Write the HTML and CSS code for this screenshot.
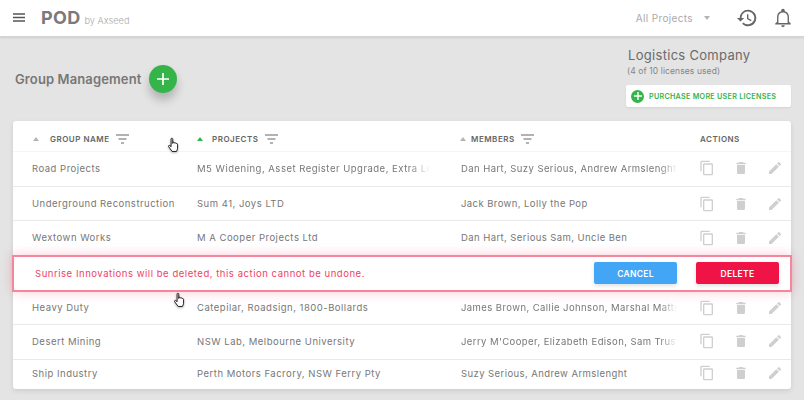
FILE: index.html
```html
<!DOCTYPE html>
<html lang="en">
<head>
<meta charset="utf-8">
<title>POD by Axseed</title>
<link rel="stylesheet" href="styles.css">
</head>
<body>
<svg class="sprites" width="0" height="0">
  <symbol id="filter" viewBox="0 0 13 10"><path d="M0 1h13M2.500 5h8M5 9h3" fill="none" stroke="#666" stroke-width="1.100"/></symbol>
  <symbol id="copy" viewBox="0 0 24 24"><path d="M16 1H4a2 2 0 0 0-2 2v14h2V3h12V1zm3 4H8a2 2 0 0 0-2 2v14a2 2 0 0 0 2 2h11a2 2 0 0 0 2-2V7a2 2 0 0 0-2-2zm0 16H8V7h11v14z" fill="#cfcfcf"/></symbol>
  <symbol id="trash" viewBox="0 0 24 24"><path d="M6 19a2 2 0 0 0 2 2h8a2 2 0 0 0 2-2V7H6v12zM19 4h-3.500l-1-1h-5l-1 1H5v2h14V4z" fill="#cfcfcf"/></symbol>
  <symbol id="pencil" viewBox="0 0 24 24"><path d="M3 17.250V21h3.750L17.810 9.940l-3.750-3.750L3 17.250zM20.710 7.040a1 1 0 0 0 0-1.410l-2.340-2.340a1 1 0 0 0-1.410 0l-1.830 1.830 3.750 3.750 1.830-1.830z" fill="#cfcfcf"/></symbol>
  <symbol id="hand" viewBox="0 0 14 18"><path d="M4.500 1.500c.8-.7 1.700-.2 1.700.7v4.600l.1-1c.8-.6 1.600-.3 1.700.5.800-.5 1.600-.2 1.700.6.800-.3 1.600 0 1.700.9v4.200c0 1.300-.7 2.100-1.200 3.400H5.500L2 10.500c-.8-1-.1-1.900.9-1.500l1.500 1.300V2z" fill="#fff" stroke="#111" stroke-width="1"/></symbol>
</svg>

<header class="topbar">
  <svg class="menu" viewBox="0 0 12 9" width="12" height="9"><path d="M0 1h12M0 4.500h12M0 8h12" stroke="#555" stroke-width="1.400"/></svg>
  <div class="brand"><span class="brand-name">POD</span><span class="brand-by">by Axseed</span></div>
  <div class="top-right">
    <span class="project-select">All Projects</span>
    <span class="select-caret"></span>
    <svg class="history" viewBox="0 0 24 24" width="22" height="22"><path d="M13 3a9 9 0 0 0-9 9H1l3.900 3.900L9 12H6a7 7 0 1 1 2.100 4.900l-1.400 1.400A9 9 0 1 0 13 3zm-1 5v5l4.300 2.500.7-1.200-3.500-2.100V8H12z" fill="#666"/></svg>
    <svg class="bell" viewBox="0 0 24 24" width="22" height="22"><path d="M12 22a2 2 0 0 0 2-2h-4a2 2 0 0 0 2 2zm6.500-6v-5c0-3.100-1.600-5.600-4.500-6.300V4a2 2 0 0 0-4 0v.7C7.100 5.400 5.500 7.900 5.500 11v5l-2 2v1h17v-1l-2-2zm-1.500 1.500H7V11c0-2.800 2-5 5-5s5 2.200 5 5v6.500z" fill="#666"/></svg>
  </div>
</header>

<main class="page">
  <section class="page-head">
    <div class="title-wrap">
      <h1 class="title">Group Management</h1>
      <button class="fab" type="button" aria-label="Add group"><svg viewBox="0 0 12 12" width="12" height="12"><path d="M6 0v12M0 6h12" stroke="#fff" stroke-width="1.700"/></svg></button>
    </div>
    <div class="company">
      <div class="company-name">Logistics Company</div>
      <div class="company-sub">(4 of 10 licenses used)</div>
      <div class="purchase">
        <span class="purchase-icon"><svg viewBox="0 0 8 8" width="8" height="8"><path d="M4 0v8M0 4h8" stroke="#fff" stroke-width="1.400"/></svg></span>
        <span>PURCHASE MORE USER LICENSES</span>
      </div>
    </div>
  </section>

  <section class="card">
    <div class="row head">
      <div class="c1 hcell"><span class="sort"></span><span class="hname">GROUP NAME</span><svg class="filter"><use href="#filter"/></svg></div>
      <div class="c2 hcell"><span class="sort on"></span><span class="hname">PROJECTS</span><svg class="filter"><use href="#filter"/></svg></div>
      <div class="c3 hcell"><span class="sort"></span><span class="hname">MEMBERS</span><svg class="filter"><use href="#filter"/></svg></div>
      <div class="c4 hcell"><span class="hname">ACTIONS</span></div>
    </div>

    <div class="row">
      <div class="c1">Road Projects</div>
      <div class="c2 fade">M5 Widening, Asset Register Upgrade, Extra Lo</div>
      <div class="c3 fade">Dan Hart, Suzy Serious, Andrew Armslenght</div>
      <div class="c4 icons"><svg><use href="#copy"/></svg><svg><use href="#trash"/></svg><svg><use href="#pencil"/></svg></div>
    </div>
    <div class="row after">
      <div class="c1">Underground Reconstruction</div>
      <div class="c2">Sum 41, Joys LTD</div>
      <div class="c3">Jack Brown, Lolly the Pop</div>
      <div class="c4 icons"><svg><use href="#copy"/></svg><svg><use href="#trash"/></svg><svg><use href="#pencil"/></svg></div>
    </div>
    <div class="row">
      <div class="c1">Wextown Works</div>
      <div class="c2">M A Cooper Projects Ltd</div>
      <div class="c3">Dan Hart, Serious Sam, Uncle Ben</div>
      <div class="c4 icons"><svg><use href="#copy"/></svg><svg><use href="#trash"/></svg><svg><use href="#pencil"/></svg></div>
    </div>

    <div class="confirm">
      <span class="confirm-text">Sunrise Innovations will be deleted, this action cannot be undone.</span>
      <button class="btn cancel" type="button">CANCEL</button>
      <button class="btn delete" type="button">DELETE</button>
    </div>

    <div class="row after">
      <div class="c1">Heavy Duty</div>
      <div class="c2">Catepilar, Roadsign, 1800-Bollards</div>
      <div class="c3 fade">James Brown, Callie Johnson, Marshal Matte</div>
      <div class="c4 icons"><svg><use href="#copy"/></svg><svg><use href="#trash"/></svg><svg><use href="#pencil"/></svg></div>
    </div>
    <div class="row">
      <div class="c1">Desert Mining</div>
      <div class="c2">NSW Lab, Melbourne University</div>
      <div class="c3 fade">Jerry M'Cooper, Elizabeth Edison, Sam Trust</div>
      <div class="c4 icons"><svg><use href="#copy"/></svg><svg><use href="#trash"/></svg><svg><use href="#pencil"/></svg></div>
    </div>
    <div class="row last">
      <div class="c1">Ship Industry</div>
      <div class="c2">Perth Motors Facrory, NSW Ferry Pty</div>
      <div class="c3">Suzy Serious, Andrew Armslenght</div>
      <div class="c4 icons"><svg><use href="#copy"/></svg><svg><use href="#trash"/></svg><svg><use href="#pencil"/></svg></div>
    </div>
  </section>
</main>

<svg class="cursor cursor-a"><use href="#hand"/></svg>
<svg class="cursor cursor-b"><use href="#hand"/></svg>
</body>
</html>
```
FILE: styles.css
```css
* { box-sizing: border-box; }
html, body { margin: 0; padding: 0; }
body {
  width: 804px;
  height: 400px;
  overflow: hidden;
  position: relative;
  background: #e4e4e4;
  font-family: Inter, "Liberation Sans", sans-serif;
  color: #666;
}
.sprites { position: absolute; }

.topbar {
  height: 37px;
  background: #fff;
  border-bottom: 1px solid #d4d4d4;
  box-shadow: 0 1px 2px rgba(0,0,0,.1);
  display: flex;
  align-items: center;
  padding: 0 0 1px 13px;
}
.menu { margin-right: 16px; flex: none; }
.brand { display: flex; align-items: baseline; gap: 4px; }
.brand-name { font-size: 18px; font-weight: 700; color: #7a7a7a; letter-spacing: .3px; }
.brand-by { font-size: 9.200px; color: #aaa; font-weight: 300; }
.top-right { margin-left: auto; display: flex; align-items: center; }
.project-select { font-size: 10px; color: #aaa; letter-spacing: .35px; }
.select-caret {
  margin: 0 0 0 11px;
  border: 3.500px solid transparent;
  border-top: 4px solid #b4b4b4;
  border-bottom: 0;
}
.history { margin-left: 26px; }
.bell { margin: 0 10px 0 14px; }

.page { padding: 0 13px; }
.page-head {
  height: 84px;
  display: flex;
  justify-content: space-between;
}
.title-wrap { display: flex; align-items: center; padding-left: 2px; height: 84px; }
.title { margin: 0; font-size: 13px; font-weight: 600; color: #777; letter-spacing: .12px; }
.fab {
  width: 28px;
  height: 28px;
  margin-left: 8px;
  border: 0;
  border-radius: 50%;
  background: #35b44a;
  box-shadow: 0 7px 10px rgba(0,0,0,.22);
  display: flex;
  align-items: center;
  justify-content: center;
  padding: 0;
}
.company { width: 165px; margin-top: 10px; }
.company-name { font-size: 13px; line-height: 16px; color: #6b6b6b; letter-spacing: .3px; margin-left: 2px; }
.company-sub { font-size: 8.500px; line-height: 12px; margin: 2px 0 0 1px; color: #858585; letter-spacing: .1px; }
.purchase {
  margin-top: 8px;
  height: 22px;
  background: #fff;
  border-radius: 2px;
  box-shadow: 0 1px 2px rgba(0,0,0,.08);
  display: flex;
  align-items: center;
  gap: 5px;
  padding-left: 5px;
  font-size: 7.200px;
  font-weight: 600;
  color: #35b44a;
  letter-spacing: .27px;
  white-space: nowrap;
}
.purchase-icon {
  width: 13px;
  height: 13px;
  border-radius: 50%;
  background: #35b44a;
  display: flex;
  align-items: center;
  justify-content: center;
}

.card {
  width: 778px;
  height: 268px;
  background: #fff;
  border-radius: 3px;
  box-shadow: 0 2px 5px rgba(0,0,0,.1);
  display: flex;
  flex-direction: column;
}
.row {
  display: flex;
  align-items: center;
  height: 34.670px;
  flex: none;
  padding-bottom: 1px;
  border-bottom: 1px solid #e9e9e9;
  font-size: 9.500px;
  color: #777;
  letter-spacing: .5px;
  white-space: nowrap;
}
.row.head { height: 31px; padding: 5px 0 0; border-bottom-color: #f5f5f5; }
.row.after { padding: 1px 0 0; }
.row.last { flex: 1; padding-bottom: 2px; border-bottom: 0; }
.c1 { width: 165px; padding-left: 19px; flex: none; }
.c2 { width: 263px; padding-left: 19px; flex: none; overflow: hidden; }
.c3 { width: 241px; padding-left: 20px; flex: none; overflow: hidden; letter-spacing: .42px; }
.c4 { flex: 1; }
.row .c2.fade {
  -webkit-mask-image: linear-gradient(to right, #000 88%, transparent 96%);
  mask-image: linear-gradient(to right, #000 88%, transparent 96%);
}
.row .c3.fade {
  -webkit-mask-image: linear-gradient(to right, #000 91%, transparent 98%);
  mask-image: linear-gradient(to right, #000 91%, transparent 98%);
}
.hcell { display: flex; align-items: center; }
.c4.hcell { padding-left: 18px; }
.hname { font-size: 8px; font-weight: 600; color: #666; letter-spacing: .5px; }
.c1.hcell { padding-left: 20px; }
.c2.hcell { padding-left: 19px; }
.c3.hcell { padding-left: 19px; }
.sort {
  width: 0;
  height: 0;
  margin-right: 11px;
  border: 3.500px solid transparent;
  border-top: 0;
  border-bottom: 4px solid #b4b4b4;
}
.c2 .sort { margin-right: 9px; }
.c3 .sort { margin-right: 5px; }
.sort.on { border-bottom-color: #35b44a; }
.filter { width: 13px; height: 10px; margin-left: 6px; }
.c2 .filter { margin-left: 7px; }
.icons { display: flex; align-items: center; padding-left: 17px; gap: 18px; }
.icons svg { width: 16px; height: 16px; }

.confirm {
  position: relative;
  z-index: 2;
  flex: none;
  height: 37px;
  margin: -1px -1px -1.670px;
  background: #fff;
  border: 2px solid #f5879d;
  box-shadow: 0 0 12px rgba(238,18,72,.22);
  display: flex;
  align-items: center;
  padding-left: 21px;
  font-size: 9.500px;
  letter-spacing: .54px;
  color: #ee3f66;
}
.confirm-text { margin-right: auto; }
.btn {
  height: 22px;
  width: 83px;
  border: 0;
  border-radius: 2px;
  color: #fff;
  font-family: inherit;
  font-size: 8.500px;
  font-weight: 600;
  letter-spacing: .3px;
  box-shadow: 0 2px 4px rgba(0,0,0,.12);
  padding: 1px 0 0;
}
.cancel { background: #42a5f5; margin-right: 19px; }
.delete { background: #ef1346; margin-right: 11px; }

.cursor { position: absolute; width: 13px; height: 17px; filter: drop-shadow(0 1px 1px rgba(0,0,0,.3)); }
.cursor-a { left: 167px; top: 137px; }
.cursor-b { left: 173px; top: 292px; }
```
